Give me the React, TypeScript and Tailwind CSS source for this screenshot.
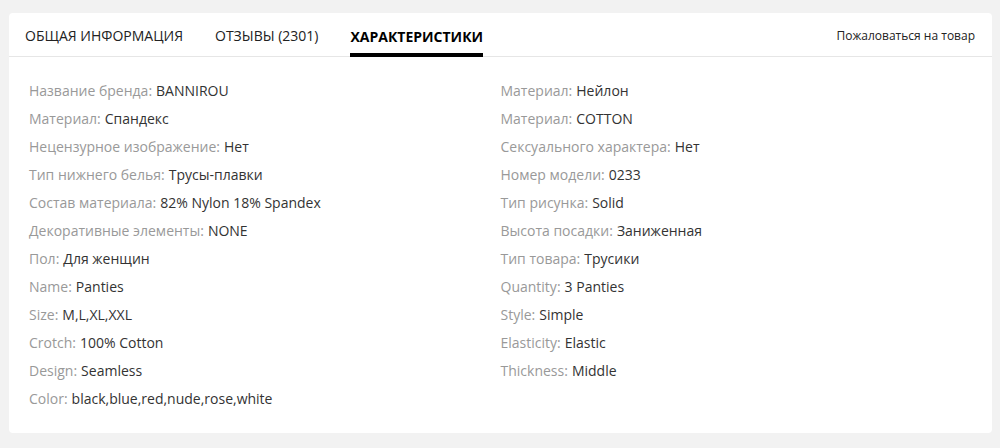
const left: [string, string][] = [
  ["Название бренда", "BANNIROU"],
  ["Материал", "Спандекс"],
  ["Нецензурное изображение", "Нет"],
  ["Тип нижнего белья", "Трусы-плавки"],
  ["Состав материала", "82% Nylon 18% Spandex"],
  ["Декоративные элементы", "NONE"],
  ["Пол", "Для женщин"],
  ["Name", "Panties"],
  ["Size", "M,L,XL,XXL"],
  ["Crotch", "100% Cotton"],
  ["Design", "Seamless"],
  ["Color", "black,blue,red,nude,rose,white"],
];

const right: [string, string][] = [
  ["Материал", "Нейлон"],
  ["Материал", "COTTON"],
  ["Сексуального характера", "Нет"],
  ["Номер модели", "0233"],
  ["Тип рисунка", "Solid"],
  ["Высота посадки", "Заниженная"],
  ["Тип товара", "Трусики"],
  ["Quantity", "3 Panties"],
  ["Style", "Simple"],
  ["Elasticity", "Elastic"],
  ["Thickness", "Middle"],
];

const Prop = ({ name, value }: { name: string; value: string }) => (
  <li className="h-[28px] flex items-center text-[14px] leading-[20px]">
    <span className="text-[#999]">{name}:</span>
    <span className="text-[#333] ml-[4px]">{value}</span>
  </li>
);

export default function App() {
  return (
    <div className="w-[1000px] h-[448px] bg-[#f2f2f2] pt-[13px] pl-[9px] font-['Open_Sans',sans-serif]">
      <div className="w-[983px] h-[420px] bg-white rounded-[4px]">
        {/* tabs */}
        <div className="h-[44px] flex items-end justify-between border-b border-[#e6e6e6] pl-[16px] pr-[17px]">
          <div className="flex gap-[32px] h-full">
            <div className="flex items-center text-[14px] text-[#222] pt-[2px]">ОБЩАЯ ИНФОРМАЦИЯ</div>
            <div className="flex items-center text-[14px] text-[#222] pt-[2px]">ОТЗЫВЫ (2301)</div>
            <div className="flex items-center text-[14px] font-bold text-black border-b-[4px] border-black pt-[6px] mb-[-1px]">
              ХАРАКТЕРИСТИКИ
            </div>
          </div>
          <div className="h-full flex items-center text-[12px] text-[#222] pt-[2px]">Пожаловаться на товар</div>
        </div>
        {/* props */}
        <div className="grid grid-cols-2 px-[20px] pt-[20px]">
          <ul>
            {left.map(([n, v], i) => (
              <Prop key={i} name={n} value={v} />
            ))}
          </ul>
          <ul>
            {right.map(([n, v], i) => (
              <Prop key={i} name={n} value={v} />
            ))}
          </ul>
        </div>
      </div>
    </div>
  );
}
